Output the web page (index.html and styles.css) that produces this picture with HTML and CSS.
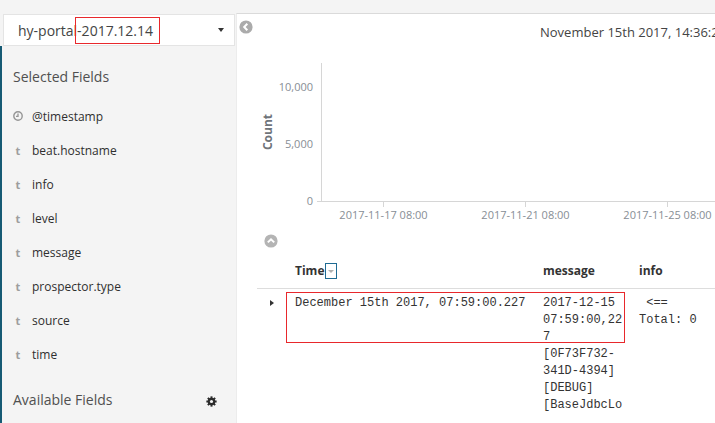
FILE: index.html
```html
<!DOCTYPE html>
<html>
<head>
<meta charset="utf-8">
<title>Discover</title>
<link rel="stylesheet" href="styles.css">
</head>
<body>
<div class="app">
  <aside class="sidebar">
    <div class="index-select">
      <span class="index-name">hy-portal-2017.12.14</span>
      <span class="select-caret"></span>
    </div>
    <span class="annot annot-index"></span>
    <div class="sidebar-body">
      <h3 class="section-title">Selected Fields</h3>
      <ul class="field-list">
        <li class="field"><span class="field-type"><svg class="clock" width="10" height="10" viewBox="0 0 10 10"><circle cx="5" cy="5" r="4.2" fill="none" stroke="#959595" stroke-width="1.4"/><path d="M5 2.5V5.3H3" fill="none" stroke="#959595" stroke-width="1.3"/></svg></span><span class="field-name">@timestamp</span></li>
        <li class="field"><span class="field-type">t</span><span class="field-name">beat.hostname</span></li>
        <li class="field"><span class="field-type">t</span><span class="field-name">info</span></li>
        <li class="field"><span class="field-type">t</span><span class="field-name">level</span></li>
        <li class="field"><span class="field-type">t</span><span class="field-name">message</span></li>
        <li class="field"><span class="field-type">t</span><span class="field-name">prospector.type</span></li>
        <li class="field"><span class="field-type">t</span><span class="field-name">source</span></li>
        <li class="field"><span class="field-type">t</span><span class="field-name">time</span></li>
      </ul>
      <div class="section-row">
        <h3 class="section-title">Available Fields</h3>
        <svg class="gear" width="11" height="11" viewBox="0 0 12 12"><g fill="#2b2b2b"><circle cx="6" cy="6" r="4.1"/><rect x="4.9" y="0.4" width="2.2" height="11.2"/><rect x="4.9" y="0.4" width="2.2" height="11.2" transform="rotate(45 6 6)"/><rect x="4.9" y="0.4" width="2.2" height="11.2" transform="rotate(90 6 6)"/><rect x="4.9" y="0.4" width="2.2" height="11.2" transform="rotate(135 6 6)"/></g><circle cx="6" cy="6" r="1.7" fill="#f4f4f4"/></svg>
      </div>
    </div>
  </aside>
  <main class="main">
    <div class="main-header">
      <svg class="round-icon" width="14" height="14" viewBox="0 0 14 14"><circle cx="7" cy="7" r="6.6" fill="#ababab"/><path d="M8.3 3.8 5.2 7l3.1 3.2" fill="none" stroke="#fff" stroke-width="2"/></svg>
      <span class="time-range">November 15th 2017, 14:36:28.412 to December 15th 2017, 14:36:28.412</span>
    </div>
    <svg class="chart" width="478" height="170" viewBox="0 0 478 170">
      <g stroke="#d6d6d6" stroke-width="1" fill="none">
        <path d="M84.5 8V147"/>
        <path d="M80 146.5H478"/>
        <path d="M146.5 146V152M288.5 146V152M430.5 146V152"/>
      </g>
      <g class="tick-label" text-anchor="end">
        <text x="76" y="36">10,000</text>
        <text x="76" y="93">5,000</text>
        <text x="76" y="150">0</text>
      </g>
      <g class="tick-label" text-anchor="middle">
        <text x="146.5" y="164">2017-11-17 08:00</text>
        <text x="288.5" y="164">2017-11-21 08:00</text>
        <text x="430.5" y="164">2017-11-25 08:00</text>
      </g>
      <text class="axis-title" x="31" y="81" text-anchor="middle" transform="rotate(-90 31 77)">Count</text>
    </svg>
    <div class="collapse-row">
      <svg class="round-icon" width="14" height="14" viewBox="0 0 14 14"><circle cx="7" cy="7" r="6.6" fill="#b4b4b4"/><path d="M3.8 8.4 7 5.3l3.2 3.1" fill="none" stroke="#fff" stroke-width="2"/></svg>
    </div>
    <div class="table-wrap">
      <table class="doc-table">
        <thead>
          <tr>
            <th class="col-toggle"></th>
            <th class="col-time">Time<span class="sort-btn"><span class="sort-caret"></span></span></th>
            <th class="col-msg">message</th>
            <th class="col-info">info</th>
          </tr>
        </thead>
        <tbody>
          <tr>
            <td class="col-toggle"><span class="row-caret"></span></td>
            <td class="col-time mono">December 15th 2017, 07:59:00.227</td>
            <td class="col-msg mono"><div class="msg-clip">2017-12-15 07:59:00,227 [0F73F732-<wbr>341D-4394] [DEBUG] [BaseJdbcLogger] ==&gt; Preparing: SELECT count(0) FROM t_portal_user</div></td>
            <td class="col-info mono info-text"> &lt;==
Total: 0</td>
          </tr>
        </tbody>
      </table>
      <span class="annot annot-row"></span>
    </div>
  </main>
</div>
</body>
</html>
```
FILE: styles.css
```css
* {
  box-sizing: border-box;
}

html,
body {
  margin: 0;
  padding: 0;
  height: 100%;
  overflow: hidden;
}

body {
  font-family: "Open Sans", "Liberation Sans", sans-serif;
  background: #f4f4f4;
  color: #333;
}

.app {
  display: flex;
  width: 715px;
  height: 423px;
  padding-top: 13px;
}

/* ---------- sidebar ---------- */
.sidebar {
  position: relative;
  width: 236px;
  flex: none;
  display: flex;
  flex-direction: column;
}

.index-select {
  margin: 1px 0 0 3px;
  width: 232px;
  height: 32px;
  flex: none;
  background: #fff;
  border: 1px solid #e4e4e4;
  display: flex;
  align-items: center;
  padding: 0 10px 0 14px;
  font-size: 14px;
  color: #444;
}

.select-caret {
  margin-left: auto;
  width: 0;
  height: 0;
  border-left: 3.5px solid transparent;
  border-right: 3.5px solid transparent;
  border-top: 4px solid #333;
}

.annot {
  position: absolute;
  border: 1px solid #e8282c;
  pointer-events: none;
}

.annot-index {
  left: 75px;
  top: 4px;
  width: 85px;
  height: 27px;
}

.sidebar-body {
  flex: 1;
  border-left: 2px solid #165a74;
  padding: 21px 19px 0 11px;
}

.section-title {
  margin: 0;
  font-size: 14px;
  font-weight: 400;
  line-height: 20px;
  color: #505050;
}

.field-list {
  list-style: none;
  margin: 12px 0 0;
  padding: 0;
}

.field {
  height: 34px;
  display: flex;
  align-items: center;
  font-size: 12px;
  color: #2f2f2f;
}

.field-type {
  width: 10px;
  margin-right: 9px;
  display: flex;
  justify-content: center;
  font-size: 11px;
  font-weight: 700;
  color: #9d9d9d;
}

.section-row {
  margin-top: 19px;
  display: flex;
  align-items: center;
  justify-content: space-between;
}

.gear {
  display: block;
  margin-top: 3px;
}

/* ---------- main ---------- */
.main {
  flex: 1;
  min-width: 0;
  overflow: hidden;
  background: #fff;
  border-top: 1px solid #dadada;
  border-left: 1px solid #ececec;
}

.main-header {
  height: 41px;
  display: flex;
  align-items: flex-start;
  padding: 6px 0 0 2px;
  white-space: nowrap;
}

.round-icon {
  display: block;
  flex: none;
}

.time-range {
  margin: 3px 0 0 287px;
  font-size: 13px;
  line-height: 18px;
  color: #444;
}

.chart {
  display: block;
}

.tick-label {
  font-family: "Open Sans", "Liberation Sans", sans-serif;
  font-size: 11px;
  fill: #878e95;
}

.axis-title {
  font-family: "Open Sans", "Liberation Sans", sans-serif;
  font-size: 12px;
  font-weight: 700;
  fill: #6f747a;
}

.collapse-row {
  height: 32px;
  padding: 9px 0 0 27px;
}

.table-wrap {
  position: relative;
  margin-left: 20px;
}

.doc-table {
  border-collapse: collapse;
  table-layout: fixed;
  width: 474px;
}

.doc-table th {
  text-align: left;
  font-size: 12px;
  font-weight: 700;
  color: #333;
  line-height: 17px;
  padding: 5px 8px 8px;
  border-bottom: 1px solid #dddddd;
  white-space: nowrap;
}

.doc-table td {
  vertical-align: top;
  padding: 6px 8px 0;
  line-height: 17px;
}

.doc-table .col-toggle {
  width: 30px;
  padding: 0 0 0 13px;
}

.doc-table td.col-toggle {
  padding-top: 11px;
}

.col-time {
  width: 248px;
}

.col-msg {
  width: 96px;
  overflow-wrap: anywhere;
}

.msg-clip {
  max-height: 119px;
  overflow: hidden;
}

.col-info {
  width: 100px;
}

.mono {
  font-family: "Liberation Mono", "DejaVu Sans Mono", monospace;
  font-size: 12px;
  color: #333;
}

.info-text {
  white-space: pre-wrap;
}

.row-caret {
  display: block;
  width: 0;
  height: 0;
  border-top: 3.5px solid transparent;
  border-bottom: 3.5px solid transparent;
  border-left: 4px solid #333;
}

.sort-btn {
  display: inline-block;
  vertical-align: middle;
  position: relative;
  top: -1px;
  width: 12px;
  height: 16px;
  margin-left: 1px;
  border: 1.5px solid #1f6b93;
}

.sort-caret {
  position: absolute;
  left: 2px;
  top: 6px;
  width: 0;
  height: 0;
  border-left: 3px solid transparent;
  border-right: 3px solid transparent;
  border-top: 3px solid #b0b0b0;
}

.annot-row {
  left: 29px;
  top: 35px;
  width: 339px;
  height: 51px;
}
```
